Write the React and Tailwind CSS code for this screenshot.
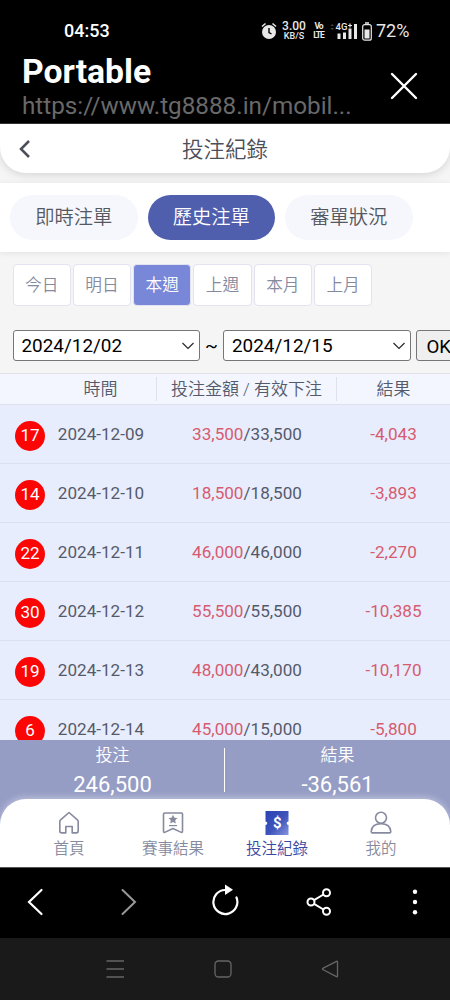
import clsx from "clsx";

const tabs = ["即時注單", "歷史注單", "審單狀況"];
const ranges = ["今日", "明日", "本週", "上週", "本月", "上月"];

const records = [
  { count: 17, date: "2024-12-09", bet: "33,500", valid: "33,500", result: "-4,043" },
  { count: 14, date: "2024-12-10", bet: "18,500", valid: "18,500", result: "-3,893" },
  { count: 22, date: "2024-12-11", bet: "46,000", valid: "46,000", result: "-2,270" },
  { count: 30, date: "2024-12-12", bet: "55,500", valid: "55,500", result: "-10,385" },
  { count: 19, date: "2024-12-13", bet: "48,000", valid: "43,000", result: "-10,170" },
  { count: 6, date: "2024-12-14", bet: "45,000", valid: "15,000", result: "-5,800" },
];

const AlarmSvg = () => (
  <svg width="16" height="18" viewBox="0 0 16 18" fill="none">
    <circle cx="8" cy="10" r="7" fill="#e8e8e8" />
    <path d="M1 4.5 4.5 1.5M15 4.5 11.5 1.5" stroke="#e8e8e8" strokeWidth="1.6" />
    <path d="M8 6v4.5l2.5 1.5" stroke="#000" strokeWidth="1.4" />
  </svg>
);

const SignalSvg = () => (
  <svg width="28" height="18" viewBox="0 0 28 18" fill="#e8e8e8">
    <path d="m.5 4 1.700-2 1.700 2zM.5 6l1.700 2 1.700-2z" fill="#444" />
    <path d="M7.500 11.500h3V17h-3zM13 10.500h3V17h-3zM18.500 6.500h3V17h-3zM24 2h3v15h-3z" />
    <text x="5.500" y="8" fontSize="9.500" fontWeight="500">4G</text>
    <path d="M18 3.500h4M20 1.500v4" stroke="#e8e8e8" strokeWidth="1.200" />
  </svg>
);

const BatterySvg = () => (
  <svg width="10" height="19" viewBox="0 0 10 19" fill="none">
    <path d="M3 1h4" stroke="#e8e8e8" strokeWidth="1.5" />
    <rect x=".7" y="2.700" width="8.600" height="15.500" rx="2" stroke="#e8e8e8" strokeWidth="1.200" />
    <path d="M2.500 7.500h5V16.500h-5z" fill="#e8e8e8" />
  </svg>
);

const HomeSvg = () => (
  <svg width="24" height="24" viewBox="0 0 24 24" fill="none" stroke="currentColor" strokeWidth="1.600" strokeLinejoin="round">
    <path d="M12 1.500 3.300 9.200Q2.800 9.700 2.800 10.500V20q0 1.900 1.900 1.900H8.800V15.500h6.400v6.400h4.100q1.900 0 1.900-1.900v-9.500q0-.8-.5-1.300z" />
  </svg>
);

const ResultSvg = () => (
  <svg width="24" height="24" viewBox="0 0 24 24" fill="none" stroke="currentColor" strokeWidth="1.600" strokeLinejoin="round">
    <path d="M4 2h16.500q1 0 1 1v17q0 2-1.800 1.100L12 17.500l-7.700 3.600q-1.800.9-1.800-1.100V3.500Q2.500 2 4 2z" />
    <path d="m12 3.800 1.400 2.900 3.100.4-2.300 2.200.6 3.100L12 10.900l-2.800 1.500.6-3.100-2.300-2.200 3.100-.4z" fill="currentColor" stroke="none" />
    <path d="M8 14.600h8" strokeWidth="1.200" />
  </svg>
);

const TicketSvg = () => (
  <svg width="24" height="24" viewBox="0 0 24 24">
    <defs>
      <linearGradient id="ticket" x1="0" y1="0" x2="1" y2="1">
        <stop offset="0" stopColor="#2943b4" />
        <stop offset=".55" stopColor="#3f55ba" />
        <stop offset="1" stopColor="#8796e0" />
      </linearGradient>
    </defs>
    <path d="M.5 0h23v10.500a1.800 1.800 0 0 0 0 3.600V24H.5v-9.900a1.800 1.800 0 0 0 0-3.600z" fill="url(#ticket)" />
    <text x="12.300" y="17" textAnchor="middle" fontSize="15" fontWeight="700" fill="#fff">$</text>
  </svg>
);

const UserSvg = () => (
  <svg width="24" height="24" viewBox="0 0 24 24" fill="none" stroke="currentColor" strokeWidth="1.600" strokeLinejoin="round">
    <circle cx="12" cy="6.800" r="5.500" />
    <path d="M2.200 20.500C2.600 15.500 6 12.800 12 12.800s9.400 2.700 9.800 7.700q0 1.400-1.300 1.400h-17q-1.300 0-1.300-1.400z" />
  </svg>
);

const navItems = [
  { label: "首頁", Icon: HomeSvg },
  { label: "賽事結果", Icon: ResultSvg },
  { label: "投注紀錄", Icon: TicketSvg, active: true },
  { label: "我的", Icon: UserSvg },
];

const BrowserHeader = () => (
  <header className="h-[124px] shrink-0 bg-black border-b border-[#333] text-white">
    <div className="flex h-[54px] items-start pt-[21px] pl-16">
      <span className="mt-px w-[45px] whitespace-nowrap text-[18px] leading-[18px] font-medium">04:53</span>
      <div className="ml-[152px] flex items-center text-[#e8e8e8]">
        <AlarmSvg />
        <div className="ml-1 w-[26px] whitespace-nowrap text-center font-medium">
          <div className="text-[12px] leading-[11px]">3.00</div>
          <div className="text-[9px] leading-[9px]">KB/S</div>
        </div>
        <div className="ml-1.5 w-[11px] text-center text-[8.500px] leading-[9px] font-bold tracking-[-1px]">
          <div>Vo</div>
          <div>LTE</div>
        </div>
        <span className="ml-1.5"><SignalSvg /></span>
        <span className="ml-1"><BatterySvg /></span>
        <span className="ml-1 text-[18px] leading-[18px]">72%</span>
      </div>
    </div>
    <div className="flex items-start justify-between pl-[22px] pr-8">
      <div>
        <h1 className="text-[33.700px] leading-[36px] font-bold">Portable</h1>
        <p className="mt-0.5 text-[24.250px] leading-[28px] text-[#696969]">https://www.tg8888.in/mobil...</p>
      </div>
      <svg className="mt-[18px]" width="28" height="28" viewBox="0 0 28 28" fill="none" stroke="#fff" strokeWidth="2.400" strokeLinecap="round">
        <path d="m2 2 24 24M26 2 2 26" />
      </svg>
    </div>
  </header>
);

const DateSelect = ({ value }) => (
  <div className="flex h-[31px] w-[187.500px] shrink-0 items-center justify-between rounded-[3px] border border-[#767676] bg-white pl-2 pr-1 text-[18.900px] text-black">
    <span className="pt-0.5">{value}</span>
    <svg width="14" height="10" viewBox="0 0 14 10" fill="none" stroke="#222" strokeWidth="1.100">
      <path d="m1.500 2 5.500 5.500L12.500 2" />
    </svg>
  </div>
);

const RecordTable = () => (
  <section className="h-[367px] overflow-hidden bg-[#e8edfd] text-[17.100px] text-[#555a6b]">
    <div className="flex h-8 items-center border-y border-[#dfe1ef] bg-[#f3f6ff] pl-[45px] text-[17px] leading-[24px] font-[350]">
      <div className="w-[112px] border-r border-[#dfe1ef] text-center">時間</div>
      <div className="w-[180px] border-r border-[#dfe1ef] text-center">投注金額 / 有效下注</div>
      <div className="flex-1 text-center">結果</div>
    </div>
    {records.map((row) => (
      <div key={row.date} className="flex h-[59px] items-center border-b border-[#dcdff0] leading-[20px]">
        <div className="mt-[3px] ml-[15px] flex size-[30px] items-center justify-center rounded-full bg-[#fb0505] pb-0.5 text-white">
          {row.count}
        </div>
        <div className="w-[112px] text-center">{row.date}</div>
        <div className="w-[180px] text-center">
          <span className="text-[#d65b70]">{row.bet}</span>/{row.valid}
        </div>
        <div className="flex-1 text-center text-[#d65b70]">{row.result}</div>
      </div>
    ))}
  </section>
);

const BottomNav = () => (
  <div className="h-[127px] bg-[#969dc5]">
    <div className="flex h-[59px] items-center text-center text-white">
      <div className="w-1/2 pt-px">
        <div className="text-[17px] leading-[28px] font-[350]">投注</div>
        <div className="text-[22px] leading-[31px]">246,500</div>
      </div>
      <div className="-mx-px h-[44px] w-px bg-white" />
      <div className="w-1/2 pt-px pl-0.5">
        <div className="text-[17px] leading-[28px] font-[350]">結果</div>
        <div className="text-[22px] leading-[31px]">-36,561</div>
      </div>
    </div>
    <nav className="flex h-[68px] rounded-t-[26px] bg-white px-[17px] pt-3 shadow-[0_-2px_6px_rgba(255,255,255,0.35)]">
      {navItems.map(({ label, Icon, active }) => (
        <div key={label} className={clsx("flex w-[104px] flex-col items-center", active ? "text-[#3949a5]" : "text-[#858a9e]")}>
          <Icon />
          <span className="mt-[3px] text-[15.500px] leading-[22px] font-[350]">{label}</span>
        </div>
      ))}
    </nav>
  </div>
);

const BrowserToolbar = () => (
  <footer>
    <div className="flex h-[71px] items-center border-t border-[#555] bg-black px-[25px] pb-0.5 text-white">
      <svg width="20" height="28" viewBox="0 0 20 28" fill="none" stroke="currentColor" strokeWidth="2.200" strokeLinecap="round">
        <path d="M16.500 2 4 14l12.500 12" />
      </svg>
      <svg className="ml-[74px] text-[#999]" width="20" height="28" viewBox="0 0 20 28" fill="none" stroke="currentColor" strokeWidth="2" strokeLinecap="round">
        <path d="m3.500 2 12.500 12L3.500 26" />
      </svg>
      <svg className="ml-[72px] mb-1" width="28" height="34" viewBox="0 0 28 34" fill="none" stroke="currentColor" strokeWidth="2.200" strokeLinecap="round">
        <path d="M14 7a12 12 0 1 0 11.500 7.500" />
        <path d="M14 1.500v10.500l8-5.200z" fill="currentColor" stroke="none" />
      </svg>
      <svg className="ml-[67px]" width="26" height="28" viewBox="0 0 26 28" fill="none" stroke="currentColor" strokeWidth="2">
        <circle cx="5" cy="14" r="3.500" />
        <circle cx="20.500" cy="4.700" r="3.500" />
        <circle cx="20.500" cy="23.200" r="3.500" />
        <path d="m8 12.200 9.500-5.700M8 15.800l9.500 5.700" />
      </svg>
      <svg className="ml-auto" width="20" height="28" viewBox="0 0 20 28" fill="currentColor">
        <circle cx="10" cy="3.700" r="2.200" />
        <circle cx="10" cy="14" r="2.200" />
        <circle cx="10" cy="24.300" r="2.200" />
      </svg>
    </div>
    <div className="flex h-[62px] items-center justify-between bg-[#1a1a1a] pl-[105px] pr-[111px] text-[#666]">
      <svg width="20" height="20" viewBox="0 0 20 20" stroke="currentColor" strokeWidth="1.500">
        <path d="M1.500 2h17.500M1.500 10h17.500M1.500 18h17.500" />
      </svg>
      <svg width="18" height="18" viewBox="0 0 18 18" fill="none" stroke="currentColor" strokeWidth="1.300">
        <rect x="1" y="1" width="16" height="16" rx="3.500" />
      </svg>
      <svg width="18" height="18" viewBox="0 0 18 18" fill="none" stroke="currentColor" strokeWidth="1.300" strokeLinejoin="round">
        <path d="M15.500 1.300 2.200 8.200q-1.500.8 0 1.600l13.300 6.900q1 .4 1-.7V2q0-1.100-1-.7z" />
      </svg>
    </div>
  </footer>
);

const App = () => (
  <div className="flex h-[1000px] w-[450px] flex-col overflow-hidden bg-[#f5f5f5] font-[Roboto,'Noto_Sans_CJK_TC',sans-serif]">
    <BrowserHeader />
    <main className="h-[616px] shrink-0">
      <div className="flex h-[49px] items-center rounded-b-[26px] bg-white pl-[17px] pr-[42px] text-[#4c4e59] shadow-[0_2px_8px_rgba(0,0,0,0.13)]">
        <svg width="16" height="20" viewBox="0 0 16 20" fill="none" stroke="currentColor" strokeWidth="2.500">
          <path d="M12 2 4 10l8 8" />
        </svg>
        <h2 className="flex-1 pl-[9px] pt-1 text-center text-[21.500px] font-[350]">投注紀錄</h2>
      </div>
      <div className="mt-[10px] flex h-[69px] items-center gap-2.5 bg-white pl-[10px] shadow-[0_1px_6px_rgba(0,0,0,0.08)]">
        {tabs.map((tab, i) => (
          <button
            key={tab}
            className={clsx(
              "h-[45px] w-[127.500px] rounded-full pt-0.5 text-[19.300px] font-[350]",
              i === 1 ? "bg-[#505eae] text-white" : "bg-[#f6f7fc] text-[#555761]"
            )}
          >
            {tab}
          </button>
        ))}
      </div>
      <div className="mt-3 flex gap-0.5 pl-[12.500px]">
        {ranges.map((range, i) => (
          <button
            key={range}
            className={clsx(
              "h-[42px] w-[58.300px] rounded border-[1.500px] border-[#e2e2f1] pt-0.5 text-[16.700px] font-[350]",
              i === 2 ? "bg-[#7887d8] text-white" : "bg-white text-[#858a9e]"
            )}
          >
            {range}
          </button>
        ))}
      </div>
      <div className="mt-6 mb-3 flex items-center overflow-hidden pl-[12.500px]">
        <DateSelect value="2024/12/02" />
        <span className="w-[23px] shrink-0 text-center text-[19px] leading-[20px] text-black">~</span>
        <DateSelect value="2024/12/15" />
        <button className="ml-[5px] h-[31px] w-[52px] shrink-0 rounded-[3px] border border-[#767676] bg-[#efefef] pt-0.5 pl-2.5 text-left text-[18.700px] text-black">
          OK
        </button>
      </div>
      <RecordTable />
    </main>
    <BottomNav />
    <BrowserToolbar />
  </div>
);

export default App;
